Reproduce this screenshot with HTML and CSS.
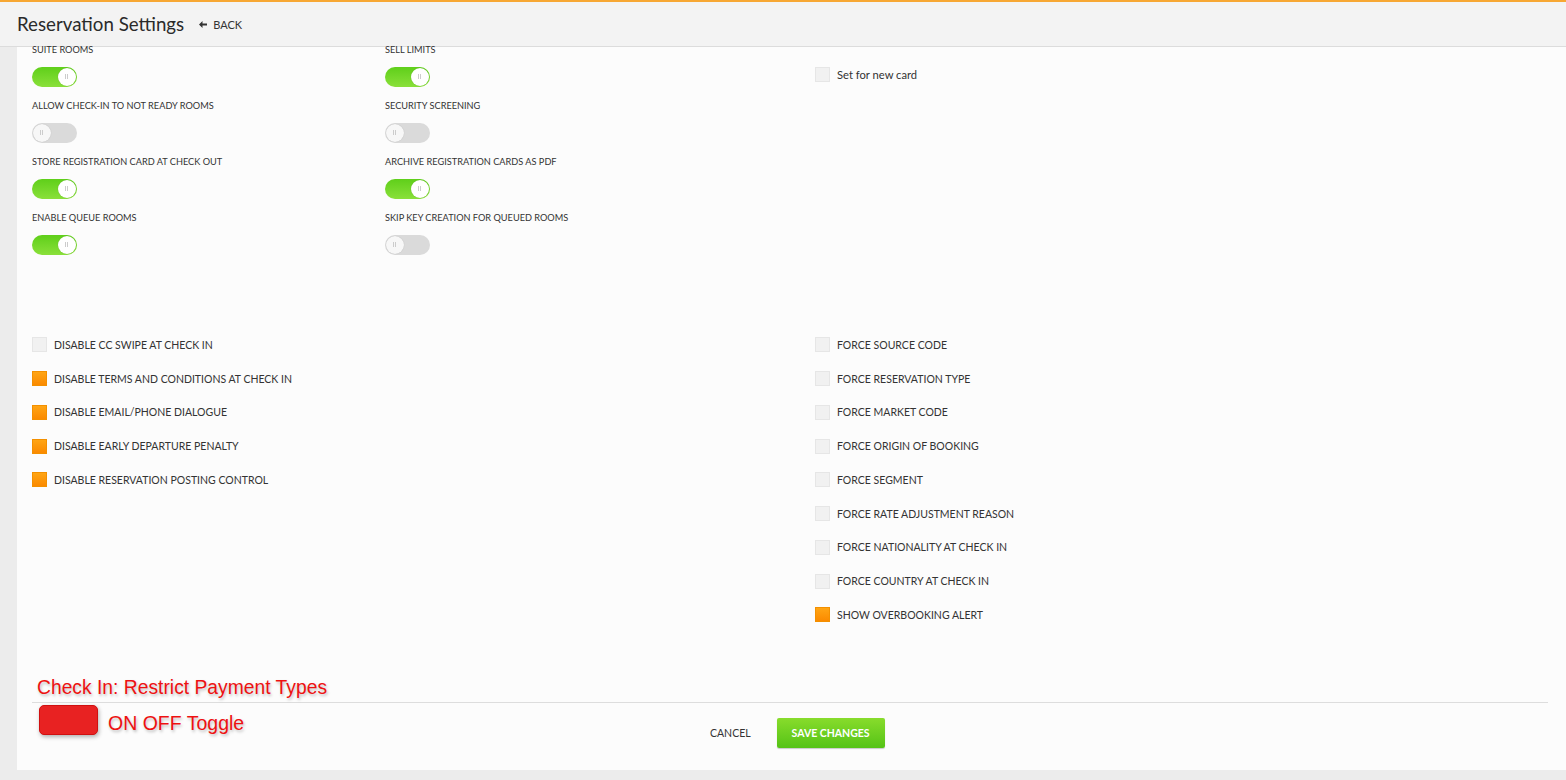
FILE: index.html
```html
<!DOCTYPE html>
<html lang="en">
	<head>
		<meta charset="UTF-8" />
		<title>Reservation Settings</title>
		<link rel="stylesheet" href="styles.css">
	</head>
	<body>
		<div class="header">
			<h1>Reservation Settings</h1>
			<a class="back" href="#">
				<svg width="8" height="7" viewBox="0 0 8 7"><path d="M0 3.5 L3.5 0 L3.5 2.5 L8 2.5 L8 4.5 L3.5 4.5 L3.5 7 Z" fill="#333"/></svg>
				BACK
			</a>
		</div>
		<div class="page">
			<div class="panel">
				<div class="toggles">
					<div class="col">
						<div class="setting">
							<div class="label">SUITE ROOMS</div>
							<div class="switch on"><span class="knob"></span></div>
						</div>
						<div class="setting">
							<div class="label">ALLOW CHECK-IN TO NOT READY ROOMS</div>
							<div class="switch"><span class="knob"></span></div>
						</div>
						<div class="setting">
							<div class="label">STORE REGISTRATION CARD AT CHECK OUT</div>
							<div class="switch on"><span class="knob"></span></div>
						</div>
						<div class="setting">
							<div class="label">ENABLE QUEUE ROOMS</div>
							<div class="switch on"><span class="knob"></span></div>
						</div>
					</div>
					<div class="col">
						<div class="setting">
							<div class="label">SELL LIMITS</div>
							<div class="switch on"><span class="knob"></span></div>
						</div>
						<div class="setting">
							<div class="label">SECURITY SCREENING</div>
							<div class="switch"><span class="knob"></span></div>
						</div>
						<div class="setting">
							<div class="label">ARCHIVE REGISTRATION CARDS AS PDF</div>
							<div class="switch on"><span class="knob"></span></div>
						</div>
						<div class="setting">
							<div class="label">SKIP KEY CREATION FOR QUEUED ROOMS</div>
							<div class="switch"><span class="knob"></span></div>
						</div>
					</div>
					<div class="col col-card">
						<label class="check plain"><span class="box"></span>Set for new card</label>
					</div>
				</div>

				<div class="checks">
					<div class="check-col">
						<label class="check"><span class="box"></span>DISABLE CC SWIPE AT CHECK IN</label>
						<label class="check"><span class="box checked"></span>DISABLE TERMS AND CONDITIONS AT CHECK IN</label>
						<label class="check"><span class="box checked"></span>DISABLE EMAIL/PHONE DIALOGUE</label>
						<label class="check"><span class="box checked"></span>DISABLE EARLY DEPARTURE PENALTY</label>
						<label class="check"><span class="box checked"></span>DISABLE RESERVATION POSTING CONTROL</label>
					</div>
					<div class="check-col">
						<label class="check"><span class="box"></span>FORCE SOURCE CODE</label>
						<label class="check"><span class="box"></span>FORCE RESERVATION TYPE</label>
						<label class="check"><span class="box"></span>FORCE MARKET CODE</label>
						<label class="check"><span class="box"></span>FORCE ORIGIN OF BOOKING</label>
						<label class="check"><span class="box"></span>FORCE SEGMENT</label>
						<label class="check"><span class="box"></span>FORCE RATE ADJUSTMENT REASON</label>
						<label class="check"><span class="box"></span>FORCE NATIONALITY AT CHECK IN</label>
						<label class="check"><span class="box"></span>FORCE COUNTRY AT CHECK IN</label>
						<label class="check"><span class="box checked"></span>SHOW OVERBOOKING ALERT</label>
					</div>
				</div>

				<div class="note-title">Check In: Restrict Payment Types</div>
				<div class="footer">
					<div class="note-toggle"><span class="red-box"></span>ON OFF Toggle</div>
					<div class="actions">
						<a class="cancel" href="#">CANCEL</a>
						<button class="save">SAVE CHANGES</button>
					</div>
				</div>
			</div>
			<div class="scrollbar"><span class="thumb"></span></div>
		</div>
	</body>
</html>
```

FILE: styles.css
```css
body {
	margin: 0;
	background: #ececec;
	font-family: Lato, "Open Sans", sans-serif;
	color: #333;
	border-top: 2px solid #f7a733;
}
.header {
	display: flex;
	align-items: center;
	height: 44px;
	padding-left: 17px;
	background: #f3f3f3;
	border-bottom: 1px solid #dcdcdc;
}
.header h1 {
	margin: 0;
	font-size: 18.7px;
	font-weight: normal;
	color: #2a2a2a;
}
.back {
	display: flex;
	align-items: center;
	gap: 6px;
	margin-left: 15px;
	font-size: 11px;
	color: #333;
	text-decoration: none;
}
.page {
	display: flex;
	padding-left: 17px;
	height: 723px;
}
.panel {
	flex: 1;
	background: #fcfcfc;
	padding: 0 14px 0 15px;
}
.scrollbar {
	width: 4px;
	display: flex;
	flex-direction: column;
	justify-content: flex-end;
}
.thumb {
	height: 404px;
	width: 3px;
	background: #fbb021;
}
.toggles {
	display: flex;
	height: 281px;
}
.col {
	width: 353px;
}
.col-card {
	margin-left: 77px;
	padding-top: 20px;
}
.setting {
	height: 56px;
}
.label {
	font-size: 9.2px;
	line-height: 6px;
	height: 20px;
	color: #333;
}
.switch {
	width: 45px;
	height: 20px;
	border-radius: 10px;
	background: #dadada;
	position: relative;
}
.switch.on {
	background: linear-gradient(#5fcf1a, #8ae03a);
}
.knob {
	position: absolute;
	top: 1px;
	left: 1px;
	width: 18px;
	height: 18px;
	border-radius: 50%;
	background: #f7f7f7;
	box-shadow: 0 0 1px rgba(0, 0, 0, 0.2);
}
.switch.on .knob {
	left: 26px;
	background: #fff;
}
.knob::before {
	content: "";
	position: absolute;
	left: 7px;
	top: 6px;
	width: 1px;
	height: 5px;
	border-left: 1px solid #ccc;
	border-right: 1px solid #ccc;
}
.checks {
	display: flex;
}
.check-col {
	width: 783px;
	display: flex;
	flex-direction: column;
}
.check {
	display: flex;
	align-items: center;
	height: 33.75px;
	font-size: 10.5px;
	color: #333;
}
.check.plain {
	height: 15px;
	font-size: 11.2px;
}
.box {
	width: 15px;
	height: 15px;
	margin-right: 7px;
	background: #f1f1f1;
	border: 1px solid #e6e6e6;
	box-sizing: border-box;
}
.box.checked {
	background: linear-gradient(#ffa514, #fb8a00);
	border-color: #f39000;
}
.note-title {
	margin-top: 45px;
	height: 25px;
	line-height: 22px;
	padding-left: 5px;
	font-family: "Liberation Sans", Arial, sans-serif;
	font-size: 19.3px;
	color: #ee1111;
	text-shadow: 1px 2px 3px rgba(0, 0, 0, 0.25);
}
.footer {
	border-top: 1px solid #ddd;
	width: 1516px;
	display: flex;
	height: 67px;
}
.note-toggle {
	display: flex;
	align-items: flex-start;
	width: 640px;
	padding-left: 7px;
	padding-top: 1px;
	line-height: 38px;
	font-family: "Liberation Sans", Arial, sans-serif;
	font-size: 19.5px;
	color: #ee1111;
	text-shadow: 1px 2px 3px rgba(0, 0, 0, 0.25);
}
.red-box {
	width: 59px;
	height: 30px;
	margin-top: 1px;
	margin-right: 10px;
	border-radius: 5px;
	background: #e82222;
	border: 1px solid #d01010;
	box-sizing: border-box;
	box-shadow: 1px 2px 4px rgba(0, 0, 0, 0.3);
}
.actions {
	display: flex;
	align-items: center;
	margin-left: 31px;
	padding-top: 15px;
	height: 30px;
}
.cancel {
	font-size: 10.5px;
	color: #333;
	text-decoration: none;
	margin-right: 26px;
}
.save {
	width: 108px;
	height: 30px;
	border: none;
	border-radius: 2px;
	background: linear-gradient(#88dc2c, #55c316);
	color: #fff;
	font-family: Lato, sans-serif;
	font-weight: bold;
	font-size: 10.5px;
	box-shadow: 0 1px 1px rgba(0, 0, 0, 0.2);
}
```
